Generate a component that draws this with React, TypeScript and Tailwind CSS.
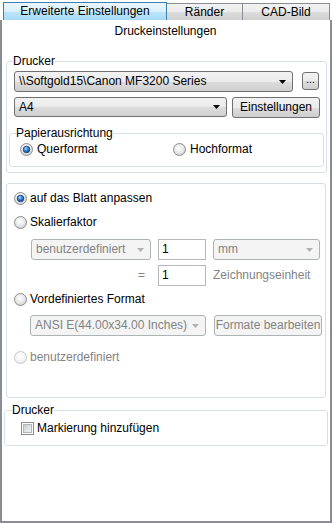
import React from 'react'

// Win7-style print settings panel

function Radio({ checked = false, disabled = false }: { checked?: boolean; disabled?: boolean }) {
  return (
    <svg width="13" height="13" viewBox="0 0 13 13" className="shrink-0">
      <defs>
        <radialGradient id="rbg" cx="45%" cy="40%" r="65%">
          <stop offset="0%" stopColor="#ffffff" />
          <stop offset="60%" stopColor="#e6e6e6" />
          <stop offset="100%" stopColor="#c9c9c9" />
        </radialGradient>
        <radialGradient id="rbgd" cx="45%" cy="40%" r="65%">
          <stop offset="0%" stopColor="#ffffff" />
          <stop offset="100%" stopColor="#ececec" />
        </radialGradient>
        <radialGradient id="rdot" cx="40%" cy="35%" r="70%">
          <stop offset="0%" stopColor="#a9dbff" />
          <stop offset="45%" stopColor="#3b86d8" />
          <stop offset="100%" stopColor="#123c78" />
        </radialGradient>
      </defs>
      <circle
        cx="6.5"
        cy="6.5"
        r="6"
        fill={disabled ? 'url(#rbgd)' : 'url(#rbg)'}
        stroke={disabled ? '#c6c8ca' : '#8e8f8f'}
      />
      {checked && <circle cx="6.5" cy="6.5" r="3.3" fill="url(#rdot)" stroke="#1b3f78" strokeWidth="0.8" />}
    </svg>
  )
}

function Checkbox() {
  return (
    <svg width="13" height="13" viewBox="0 0 13 13" className="shrink-0">
      <defs>
        <linearGradient id="cbg" x1="0" y1="0" x2="1" y2="1">
          <stop offset="0%" stopColor="#c5c9cf" />
          <stop offset="100%" stopColor="#f7f7f7" />
        </linearGradient>
      </defs>
      <rect x="0.5" y="0.5" width="12" height="12" fill="#fafafa" stroke="#8e8f8f" />
      <rect x="2.5" y="2.5" width="8" height="8" fill="url(#cbg)" stroke="#b3b7bd" />
    </svg>
  )
}

function Arrow({ disabled = false }: { disabled?: boolean }) {
  return (
    <svg width="7" height="4" viewBox="0 0 7 4" className="shrink-0">
      <path d="M0 0h7L3.5 4z" fill={disabled ? '#b0b0b0' : '#000'} />
    </svg>
  )
}

function Combo({ label, w, h = 21, disabled = false }: { label: string; w: string; h?: string | number; disabled?: boolean }) {
  const cls = disabled
    ? 'bg-[#f4f4f4] border-[#adb2b5] text-[#838383]'
    : 'bg-[linear-gradient(#f2f2f2_0%,#ebebeb_50%,#dddddd_51%,#cfcfcf_100%)] border-[#707070] text-black'
  return (
    <div className={`${w} ${h === 20 ? 'h-[20px]' : 'h-[21px]'} flex items-center justify-between rounded-[3px] border pl-[4px] pr-[6px] ${cls}`}>
      <span className="whitespace-nowrap">{label}</span>
      <Arrow disabled={disabled} />
    </div>
  )
}

function Button({ label, w, disabled = false }: { label: string; w: string; disabled?: boolean }) {
  const cls = disabled
    ? 'bg-[#f4f4f4] border-[#adb2b5] text-[#838383]'
    : 'bg-[linear-gradient(#f2f2f2_0%,#ebebeb_50%,#dddddd_51%,#cfcfcf_100%)] border-[#707070] text-black'
  return (
    <div className={`${w} h-[21px] flex items-center justify-center rounded-[3px] border whitespace-nowrap ${cls}`}>
      {label}
    </div>
  )
}

function Input({ value }: { value: string }) {
  return (
    <div className="w-[48px] h-[21px] flex items-center border border-[#b6b8bd] bg-white pl-[3px] text-black">
      {value}
    </div>
  )
}

export default function App() {
  return (
    <div className="w-[332px] h-[523px] bg-white flex flex-col text-[12px] leading-[15px] text-black font-['Liberation_Sans',Arial,sans-serif] overflow-hidden">
      {/* tabs */}
      <div className="h-[20px] flex items-end pl-[3px] shrink-0">
        <div className="w-[164px] h-[18px] flex items-center justify-center border border-b-0 border-[#3c7fb1] bg-[linear-gradient(#eaf6fd_0%,#d9f0fc_50%,#bee6fd_51%,#a7d9f5_100%)]">
          Erweiterte Einstellungen
        </div>
        <div className="w-[76px] h-[17px] flex items-center justify-center border border-l-0 border-b-0 border-[#898c95] bg-[linear-gradient(#f2f2f2_0%,#ebebeb_50%,#dddddd_51%,#cfcfcf_100%)]">
          Ränder
        </div>
        <div className="w-[87px] h-[17px] flex items-center justify-center border border-l-0 border-b-0 border-[#898c95] bg-[linear-gradient(#f2f2f2_0%,#ebebeb_50%,#dddddd_51%,#cfcfcf_100%)]">
          CAD-Bild
        </div>
      </div>

      {/* panel */}
      <div className="flex-1 flex flex-col border-x-2 border-b-2 border-[#898c95] pr-[1px]">
        <div className="h-[22px] leading-[22px] text-center">Druckeinstellungen</div>

        {/* Drucker */}
        <fieldset className="mt-[12px] ml-[4px] mr-[2px] rounded-[3px] border border-[#d5dfe5] px-[2px] pb-[5px]">
          <legend className="ml-[4px] px-0 leading-[15px]">Drucker</legend>
          <div className="flex items-start ml-[5px] mt-[2px]">
            <Combo label="\\Softgold15\Canon MF3200 Series" w="w-[279px]" />
            <div className="ml-[9px] mt-[1px] w-[17px] h-[18px] flex items-center justify-center rounded-[3px] border border-[#707070] bg-[linear-gradient(#f2f2f2_0%,#ebebeb_50%,#dddddd_51%,#cfcfcf_100%)] text-[10px] leading-[10px] pb-[2px]">
              ...
            </div>
          </div>
          <div className="flex items-start ml-[5px] mt-[5px]">
            <Combo label="A4" w="w-[213px]" h={20} />
            <div className="ml-[5px]">
              <Button label="Einstellungen" w="w-[88px]" />
            </div>
          </div>

          <fieldset className="mt-[8px] rounded-[3px] border border-[#d5dfe5] pb-[8px]">
            <legend className="ml-[6px] px-0 leading-[15px]">Papierausrichtung</legend>
            <div className="h-[17px] flex items-center">
              <div className="w-[160px] flex items-center gap-[4px] pl-[10px]">
                <Radio checked />
                <span>Querformat</span>
              </div>
              <div className="flex items-center gap-[4px] pl-[3px]">
                <Radio />
                <span>Hochformat</span>
              </div>
            </div>
          </fieldset>
        </fieldset>

        {/* Skalierung */}
        <div className="mt-[10px] ml-[4px] mr-[3px] h-[215px] rounded-[3px] border border-[#d5dfe5] pl-[7px] pt-[6px] flex flex-col">
          <div className="h-[17px] flex items-center gap-[3px]">
            <Radio checked />
            <span>auf das Blatt anpassen</span>
          </div>
          <div className="h-[17px] mt-[7px] flex items-center gap-[3px]">
            <Radio />
            <span>Skalierfaktor</span>
          </div>
          <div className="mt-[8px] ml-[17px] flex items-center gap-[7px]">
            <Combo label="benutzerdefiniert" w="w-[120px]" disabled />
            <Input value="1" />
            <Combo label="mm" w="w-[107px]" disabled />
          </div>
          <div className="mt-[5px] ml-[17px] flex items-center gap-[7px]">
            <div className="w-[120px] text-right pr-[6px] text-[#838383]">=</div>
            <Input value="1" />
            <span className="text-[#838383]">Zeichnungseinheit</span>
          </div>
          <div className="h-[17px] mt-[5px] flex items-center gap-[3px]">
            <Radio />
            <span>Vordefiniertes Format</span>
          </div>
          <div className="mt-[7px] ml-[16px] flex items-center gap-[8px]">
            <Combo label="ANSI E(44.00x34.00 Inches)" w="w-[176px]" disabled />
            <Button label="Formate bearbeiten" w="w-[108px]" disabled />
          </div>
          <div className="h-[17px] mt-[13px] flex items-center gap-[3px] text-[#838383]">
            <Radio disabled />
            <span>benutzerdefiniert</span>
          </div>
        </div>

        {/* Drucker Markierung */}
        <fieldset className="mt-[5px] ml-[2px] mr-[1px] rounded-[3px] border border-[#d5dfe5] pb-[8px]">
          <legend className="ml-[7px] px-0 leading-[15px]">Drucker</legend>
          <div className="h-[17px] mt-[2px] flex items-center gap-[3px] pl-[16px]">
            <Checkbox />
            <span>Markierung hinzufügen</span>
          </div>
        </fieldset>
      </div>
    </div>
  )
}
